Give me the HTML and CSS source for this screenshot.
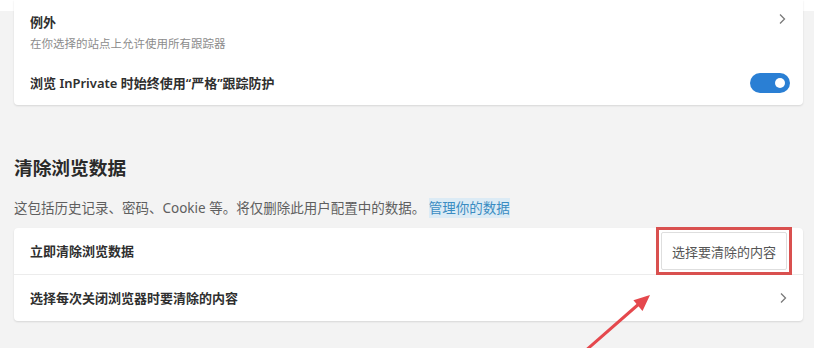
FILE: index.html
```html
<!DOCTYPE html>
<html lang="zh-CN">
<head>
<meta charset="utf-8">
<title>清除浏览数据</title>
<link rel="stylesheet" href="styles.css">
</head>
<body>
<div class="page">
  <div class="card card-top">
    <div class="row row-exceptions">
      <div class="row-text">
        <div class="row-title">例外</div>
        <div class="row-sub">在你选择的站点上允许使用所有跟踪器</div>
      </div>
      <svg class="chevron chevron-top" width="8" height="12" viewBox="0 0 8 12"><path d="M2 1.5 L6.5 6 L2 10.5" fill="none" stroke="#7a7a7a" stroke-width="1.3"/></svg>
    </div>
    <div class="row row-inprivate">
      <div class="row-title">浏览 InPrivate 时始终使用“严格”跟踪防护</div>
      <span class="toggle"><span class="knob"></span></span>
    </div>
  </div>

  <h2 class="section-title">清除浏览数据</h2>
  <p class="section-desc">这包括历史记录、密码、Cookie 等。将仅删除此用户配置中的数据。 <a class="link" href="#">管理你的数据</a></p>

  <div class="card card-clear">
    <div class="row row-now">
      <div class="row-title">立即清除浏览数据</div>
      <span class="highlight-box"><button class="btn">选择要清除的内容</button></span>
    </div>
    <div class="row row-close">
      <div class="row-title">选择每次关闭浏览器时要清除的内容</div>
      <svg class="chevron" width="8" height="12" viewBox="0 0 8 12"><path d="M2 1.5 L6.5 6 L2 10.5" fill="none" stroke="#7a7a7a" stroke-width="1.3"/></svg>
    </div>
  </div>

  <svg class="arrow" width="814" height="348" viewBox="0 0 814 348">
    <line x1="584" y1="352" x2="640" y2="303" stroke="#e5484d" stroke-width="3" stroke-linecap="round"/>
    <polygon points="650,295 642.5,311 633.4,300.2" fill="#e5484d"/>
  </svg>
</div>
</body>
</html>
```

FILE: styles.css
```css
html, body {
  margin: 0;
  padding: 0;
}
body {
  width: 814px;
  height: 348px;
  overflow: hidden;
  background: #f3f3f3;
  font-family: "Noto Sans", "Noto Sans CJK SC", sans-serif;
  color: #333;
}
.page {
  position: relative;
  height: 348px;
  padding: 0 11px 0 14px;
  background: linear-gradient(#ffffff 0 11px, #f3f3f3 11px);
}
.card {
  background: #fff;
  border-radius: 0 0 4px 4px;
  box-shadow: 0 1px 2px rgba(0, 0, 0, 0.12);
}
.card-clear {
  border-radius: 4px;
  margin-top: 10px;
}
.row {
  display: flex;
  align-items: center;
  justify-content: space-between;
  padding: 0 16px;
}
.row-exceptions {
  height: 60px;
  align-items: flex-start;
  padding-top: 13px;
  box-sizing: border-box;
}
.chevron-top {
  margin-top: 0;
  margin-right: 1px;
}
.row-inprivate {
  height: 45px;
  padding-right: 13px;
}
.row-title {
  font-size: 13px;
  font-weight: 600;
  line-height: 18px;
  color: #2f2f2f;
}
.row-sub {
  font-size: 11.5px;
  line-height: 16px;
  margin-top: 5px;
  color: #8c8c8c;
}
.toggle {
  display: flex;
  align-items: center;
  justify-content: flex-end;
  width: 40px;
  height: 20px;
  border-radius: 10px;
  background: #2a7fd4;
  padding: 0 5px;
  box-sizing: border-box;
}
.knob {
  width: 10px;
  height: 10px;
  border-radius: 50%;
  background: #fff;
}
.section-title {
  margin: 50px 0 0;
  font-size: 18.7px;
  font-weight: 600;
  line-height: 26px;
  color: #2a2a2a;
}
.section-desc {
  margin: 17px 0 0;
  font-size: 13.5px;
  line-height: 20px;
  color: #5f5f5f;
}
.link {
  color: #3a8cc2;
  background: #dcebf5;
  text-decoration: none;
  padding: 1px 0;
}
.row-now {
  height: 46px;
  border-bottom: 1px solid #ececec;
  padding-right: 11px;
}
.row-close {
  height: 46px;
}
.highlight-box {
  display: flex;
  border: 3px solid #d9504f;
  padding: 2px;
}
.btn {
  height: 38px;
  padding: 0 10px;
  font-family: inherit;
  font-size: 13px;
  color: #555;
  background: #fff;
  border: 1px solid #dedede;
  border-radius: 2px;
}
.arrow {
  position: absolute;
  left: 0;
  top: 0;
  pointer-events: none;
}
```
